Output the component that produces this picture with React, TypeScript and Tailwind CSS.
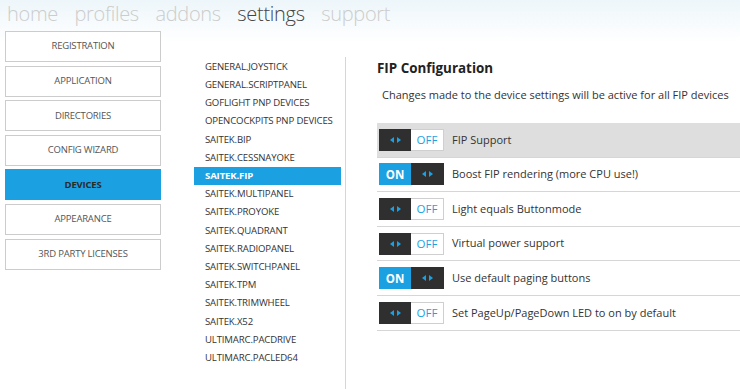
import React from "react";

const navItems = [
  { label: "home", active: false },
  { label: "profiles", active: false },
  { label: "addons", active: false },
  { label: "settings", active: true },
  { label: "support", active: false },
];

const leftItems = [
  "REGISTRATION",
  "APPLICATION",
  "DIRECTORIES",
  "CONFIG WIZARD",
  "DEVICES",
  "APPEARANCE",
  "3RD PARTY LICENSES",
];

const devices = [
  "GENERAL.JOYSTICK",
  "GENERAL.SCRIPTPANEL",
  "GOFLIGHT PNP DEVICES",
  "OPENCOCKPITS PNP DEVICES",
  "SAITEK.BIP",
  "SAITEK.CESSNAYOKE",
  "SAITEK.FIP",
  "SAITEK.MULTIPANEL",
  "SAITEK.PROYOKE",
  "SAITEK.QUADRANT",
  "SAITEK.RADIOPANEL",
  "SAITEK.SWITCHPANEL",
  "SAITEK.TPM",
  "SAITEK.TRIMWHEEL",
  "SAITEK.X52",
  "ULTIMARC.PACDRIVE",
  "ULTIMARC.PACLED64",
];

const settings = [
  { label: "FIP Support", on: false, hl: true },
  { label: "Boost FIP rendering (more CPU use!)", on: true, hl: false },
  { label: "Light equals Buttonmode", on: false, hl: false },
  { label: "Virtual power support", on: false, hl: false },
  { label: "Use default paging buttons", on: true, hl: false },
  { label: "Set PageUp/PageDown LED to on by default", on: false, hl: false },
];

function Arrows() {
  return (
    <svg width="11" height="6" viewBox="0 0 11 6">
      <polygon points="0,3 4,0 4,6" fill="#1ba1e2" />
      <polygon points="11,3 7,0 7,6" fill="#1ba1e2" />
    </svg>
  );
}

function Toggle({ on }: { on: boolean }) {
  if (on) {
    return (
      <div className="flex h-[22px] w-[65px] shrink-0">
        <div className="flex w-[32px] items-center justify-center bg-[#1ba1e2] text-[11.5px] font-bold text-white">
          ON
        </div>
        <div className="flex w-[33px] items-center justify-center bg-[#2f2f2f]">
          <Arrows />
        </div>
      </div>
    );
  }
  return (
    <div className="flex h-[22px] w-[65px] shrink-0">
      <div className="flex w-[32px] items-center justify-center bg-[#2f2f2f]">
        <Arrows />
      </div>
      <div className="flex w-[33px] items-center justify-center border border-l-0 border-[#cfcfcf] bg-white text-[11.5px] text-[#1ba1e2]">
        OFF
      </div>
    </div>
  );
}

export default function App() {
  return (
    <div
      className="relative h-[389px] w-[740px] overflow-hidden bg-[linear-gradient(to_bottom,#edf6fa_0px,#ffffff_42px)] text-[#333]"
      style={{ fontFamily: '"Open Sans", "Noto Sans", sans-serif' }}
    >
      <div className="flex h-[27px] items-center gap-[16.5px] pl-[7px] text-[20px] font-light leading-none tracking-[-0.3px]">
        {navItems.map((n) => (
          <span key={n.label} className={n.active ? "text-[#444]" : "text-[#cccccc]"}>
            {n.label}
          </span>
        ))}
      </div>
      <div className="flex">
        <div className="flex w-[194px] flex-col gap-[3.6px] pl-[5px] pt-[4px]">
          {leftItems.map((l) => {
            const sel = l === "DEVICES";
            return (
              <div
                key={l}
                className={
                  "flex h-[31px] w-[156px] items-center justify-center border text-[9.5px] tracking-[-0.2px] " +
                  (sel
                    ? "border-[#1ba1e2] bg-[#1ba1e2] font-bold text-[#2a2a2a]"
                    : "border-[#cccccc] bg-white text-[#555]")
                }
              >
                {l}
              </div>
            );
          })}
        </div>
        <div className="mr-[4px] flex w-[147px] flex-col pt-[31px]">
          {devices.map((d) => {
            const sel = d === "SAITEK.FIP";
            return (
              <div
                key={d}
                className={
                  "flex h-[18.2px] items-center pl-[11px] text-[9.6px] tracking-[-0.15px] " +
                  (sel ? "bg-[#1ba1e2] font-bold text-white" : "text-[#333]")
                }
              >
                {d}
              </div>
            );
          })}
        </div>
        <div className="mt-[30px] h-[340px] w-px bg-[#d6d6d6]" />
        <div className="flex flex-1 flex-col pl-[31px] pt-[32px]">
          <div className="text-[13.4px] font-bold leading-[18px] text-[#222]">FIP Configuration</div>
          <div className="mt-[10px] whitespace-nowrap pl-[5px] text-[11px] leading-[16px] text-[#333]">
            Changes made to the device settings will be active for all FIP devices
          </div>
          <div className="mt-[20px] flex flex-col">
            {settings.map((s) => (
              <div
                key={s.label}
                className={
                  "flex h-[34.6px] items-center gap-[8px] border-b border-[#d6d6d6] pl-[2px] " +
                  (s.hl ? "bg-[#dedede]" : "")
                }
              >
                <Toggle on={s.on} />
                <span className="text-[11px] text-[#333]">{s.label}</span>
              </div>
            ))}
          </div>
        </div>
      </div>
    </div>
  );
}
